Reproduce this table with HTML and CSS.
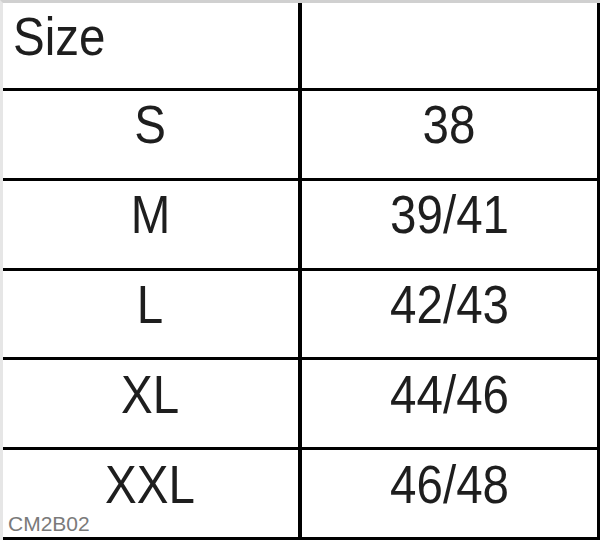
FILE: index.html
```html
<!DOCTYPE html>
<html>
<head>
<meta charset="utf-8">
<link rel="stylesheet" href="styles.css">
</head>
<body>
<div class="chart">
  <div class="cell head left"><span class="txt start">Size</span></div>
  <div class="cell head right"></div>
  <div class="cell left"><span class="txt">S</span></div>
  <div class="cell right"><span class="txt">38</span></div>
  <div class="cell left"><span class="txt">M</span></div>
  <div class="cell right"><span class="txt">39/41</span></div>
  <div class="cell left"><span class="txt">L</span></div>
  <div class="cell right"><span class="txt">42/43</span></div>
  <div class="cell left"><span class="txt">XL</span></div>
  <div class="cell right"><span class="txt">44/46</span></div>
  <div class="cell left last"><span class="txt">XXL</span><span class="code">CM2B02</span></div>
  <div class="cell right"><span class="txt">46/48</span></div>
</div>
</body>
</html>
```
FILE: styles.css
```css
html, body {
  margin: 0;
  padding: 0;
  background: #ffffff;
}
.chart {
  box-sizing: border-box;
  width: 600px;
  height: 540px;
  border-top: 3px solid #d0d0d0;
  border-left: 3px solid #e6e6e6;
  display: grid;
  grid-template-columns: 299px 298px;
  grid-template-rows: 88px repeat(5, 1fr);
  font-family: "Liberation Sans", Arial, sans-serif;
  color: #1e1e1e;
}
.cell {
  box-sizing: border-box;
  border-bottom: 3px solid #000000;
  display: flex;
  align-items: center;
  justify-content: center;
  padding-bottom: 20px;
}
.left {
  border-right: 4px solid #000000;
}
.right {
  border-right: 3px solid #000000;
}
.head.left {
  justify-content: flex-start;
  padding-left: 10px;
}
.txt {
  display: inline-block;
  font-size: 54px;
  line-height: 1;
  transform: scaleX(0.88);
}
.txt.start {
  transform-origin: left center;
}
.last {
  position: relative;
}
.code {
  position: absolute;
  left: 5px;
  bottom: 3px;
  font-size: 21px;
  line-height: 1;
  color: #7a7a7a;
  transform-origin: left bottom;
}
```
